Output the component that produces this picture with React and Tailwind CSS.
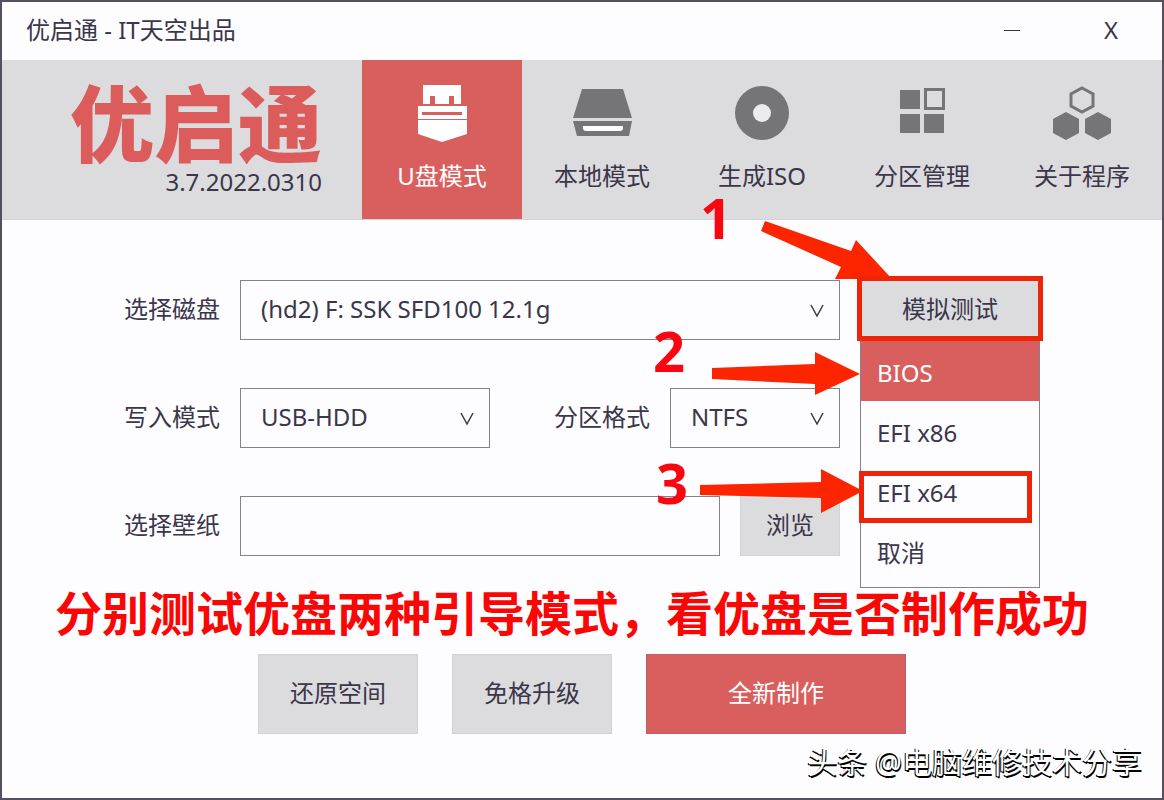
import React, { useState } from 'react'

const tabs = [
  { id: 'usb', label: 'U盘模式', Icon: UsbIcon },
  { id: 'local', label: '本地模式', Icon: DriveIcon },
  { id: 'iso', label: '生成ISO', Icon: DiscIcon },
  { id: 'partition', label: '分区管理', Icon: PartitionIcon },
  { id: 'about', label: '关于程序', Icon: AboutIcon }
]

const bootModes = ['BIOS', 'EFI x86', 'EFI x64', '取消']

function UsbIcon() {
  return (
    <svg viewBox="0 0 50 58" className="w-[50px] h-[58px]" fill="currentColor" aria-hidden="true">
      <path d="M6 1H44V20H37V12H32V20H18V12H13V20H6Z" />
      <path fillRule="evenodd" d="M1 22H50V35H1ZM5 28V31H45V28Z" />
      <path d="M1 36H50V50L25 58L1 50Z" />
    </svg>
  )
}

function DriveIcon() {
  return (
    <svg viewBox="0 0 60 52" className="w-[60px] h-[52px]" fill="currentColor" aria-hidden="true">
      <path d="M10 2H51L60 31H1Z" />
      <path d="M1 34H60L57 49H5Z" />
      <path d="M11 39H51V41Q51 44 48 44H14Q11 44 11 41Z" fill="#fdfdff" />
    </svg>
  )
}

function DiscIcon() {
  return (
    <svg viewBox="0 0 54 54" className="w-[54px] h-[54px]" aria-hidden="true">
      <circle cx="27" cy="27" r="27" fill="currentColor" />
      <circle cx="27" cy="27" r="9" fill="#ececee" />
    </svg>
  )
}

function PartitionIcon() {
  return (
    <svg viewBox="0 0 46 50" className="w-[46px] h-[50px]" fill="currentColor" aria-hidden="true">
      <rect x="1" y="2" width="20" height="19" />
      <rect x="1" y="26" width="20" height="19" />
      <rect x="25" y="26" width="20" height="19" />
      <rect x="26.5" y="1.5" width="18" height="19" fill="none" stroke="currentColor" strokeWidth="3" />
    </svg>
  )
}

function AboutIcon() {
  return (
    <svg viewBox="0 0 58 54" className="w-[58px] h-[54px]" fill="currentColor" aria-hidden="true">
      <path d="M29 2L40 8V20L29 26L18 20V8Z" fill="none" stroke="currentColor" strokeWidth="3" />
      <path d="M13 26L26 33V47L13 54L0 47V33Z" />
      <path d="M45 26L58 33V47L45 54L32 47V33Z" />
    </svg>
  )
}

function SelectBox({ id, className, options }) {
  return (
    <div className={`relative ${className}`}>
      <select
        id={id}
        className="w-full h-[60px] pl-5 pr-12 pb-0.5 bg-transparent border border-[#858090] appearance-none focus:outline-none"
      >
        {options.map(option => <option key={option}>{option}</option>)}
      </select>
      <svg viewBox="0 0 14 14" className="absolute right-4 top-6 w-3.5 h-3.5 pointer-events-none" fill="none" stroke="currentColor" strokeWidth="1.5" aria-hidden="true">
        <path d="M1 1L7 12L13 1" />
      </svg>
    </div>
  )
}

function Annotations() {
  return (
    <div className="absolute inset-0 pointer-events-none text-[#fb0510] text-[56px] leading-none font-bold">
      <svg viewBox="0 0 916 276" className="absolute top-0 left-0 w-[916px] h-[276px] overflow-visible" fill="#fd2400" aria-hidden="true">
        <path d="M641 -59L727 -29L732 -40L768 -1H711L717 -13L637 -49Z" />
        <path d="M588 88L691 84V72L736 94L691 115V104L588 99Z" />
        <path d="M576 205L697 202V189L739 211L697 233V218L576 215Z" />
        <g fill="none" stroke="#ee2408" strokeWidth="5">
          <rect x="735.5" y="-1.5" width="181" height="60" />
          <rect x="737.5" y="193.5" width="168" height="47" />
        </g>
      </svg>
      <span className="absolute left-[576px] -top-[91px]">1</span>
      <span className="absolute left-[529px] top-[42px]">2</span>
      <span className="absolute left-[532px] top-[174px]">3</span>
    </div>
  )
}

export default function App() {
  const [activeTab, setActiveTab] = useState('usb')
  const [wallpaper, setWallpaper] = useState('')

  return (
    <div className="relative flex flex-col min-h-screen overflow-hidden border-2 border-[#56505e] bg-[#fdfdff] text-[#3b364a] text-2xl font-['Noto_Sans','Noto_Sans_CJK_SC',sans-serif]">

      {/* Title bar */}
      <header className="flex items-center justify-between h-[58px] pl-6 pr-11 pb-0.5">
        <h1>优启通 - IT天空出品</h1>
        <div className="flex items-center gap-20">
          <button type="button" aria-label="最小化" className="w-5 h-8 flex items-center">
            <span className="block w-4 h-px bg-[#3b364a]"></span>
          </button>
          <button type="button" aria-label="关闭">X</button>
        </div>
      </header>

      {/* Logo and mode tabs */}
      <div className="flex h-40 bg-[#dcdcde] border-b border-[#cfd4d8]">
        <div className="flex-1 flex flex-col items-end pr-10 pt-5">
          <div className="text-[84px] leading-[88px] font-black text-[#dc5c5c] whitespace-nowrap">优启通</div>
          <div className="leading-7">3.7.2022.0310</div>
        </div>
        <nav className="flex">
          {tabs.map(({ id, label, Icon }) => (
            <button
              key={id}
              type="button"
              onClick={() => setActiveTab(id)}
              className={`flex flex-col items-center w-40 pt-6 ${activeTab === id ? 'bg-[#d95f5f] text-white' : ''}`}
            >
              <span className={`flex items-center justify-center h-[58px] ${activeTab === id ? 'text-white' : 'text-[#757577]'}`}>
                <Icon />
              </span>
              <span className="mt-4 leading-9">{label}</span>
            </button>
          ))}
        </nav>
      </div>

      {/* Options */}
      <main className="flex flex-col items-center pt-[60px]">
        <form className="relative w-[916px] flex flex-col gap-12" onSubmit={e => e.preventDefault()}>
          <div className="flex items-center gap-5">
            <label htmlFor="disk" className="w-24 pb-0.5 whitespace-nowrap">选择磁盘</label>
            <SelectBox id="disk" className="flex-1" options={['(hd2) F: SSK SFD100 12.1g']} />
            <div className="relative w-[180px]">
              <button type="button" className="w-full h-[60px] pb-0.5 bg-[#dcdcde]">模拟测试</button>
              <div role="menu" className="absolute top-full left-0 w-full pb-1.5 bg-[#fdfdff] border border-[#858090]">
                {bootModes.map(mode => (
                  <button
                    key={mode}
                    type="button"
                    role="menuitem"
                    className={`block w-full h-[60px] pl-4 pt-1 text-left ${mode === 'BIOS' ? 'bg-[#d95f5f] text-white' : ''}`}
                  >
                    {mode}
                  </button>
                ))}
              </div>
            </div>
          </div>

          <div className="flex items-center gap-5 pr-[200px]">
            <label htmlFor="write" className="w-24 pb-0.5 whitespace-nowrap">写入模式</label>
            <SelectBox id="write" className="w-[250px]" options={['USB-HDD']} />
            <label htmlFor="format" className="w-24 pb-0.5 ml-auto whitespace-nowrap">分区格式</label>
            <SelectBox id="format" className="w-[170px]" options={['NTFS']} />
          </div>

          <div className="flex items-center gap-5 pr-[200px]">
            <label htmlFor="wallpaper" className="w-24 pb-0.5 whitespace-nowrap">选择壁纸</label>
            <input
              id="wallpaper"
              value={wallpaper}
              onChange={e => setWallpaper(e.target.value)}
              className="flex-1 min-w-0 h-[60px] px-5 bg-transparent border border-[#858090] focus:outline-none"
            />
            <button type="button" className="w-[100px] h-[60px] pb-0.5 bg-[#dcdcde] border border-[#d0d3d6]">浏览</button>
          </div>

          <Annotations />
        </form>

        <p className="mt-6 mb-2 pr-5 text-[47px] leading-[66px] font-bold text-[#fb0505] whitespace-nowrap">
          分别测试优盘两种引导模式，看优盘是否制作成功
        </p>

        <div className="flex gap-[34px]">
          <button type="button" className="w-40 h-20 pb-0.5 bg-[#dcdcde] border border-[#d0d3d6]">还原空间</button>
          <button type="button" className="w-40 h-20 pb-0.5 bg-[#dcdcde] border border-[#d0d3d6]">免格升级</button>
          <button type="button" className="w-[260px] h-20 pb-0.5 bg-[#d95f5f] border border-[#b5606a] text-white">全新制作</button>
        </div>
      </main>

      <div className="absolute right-5 bottom-4 text-[30px] leading-10 text-white [text-shadow:-1px_1px_0_#000,1px_2px_0_#000] whitespace-nowrap">
        头条 @电脑维修技术分享
      </div>
    </div>
  )
}
